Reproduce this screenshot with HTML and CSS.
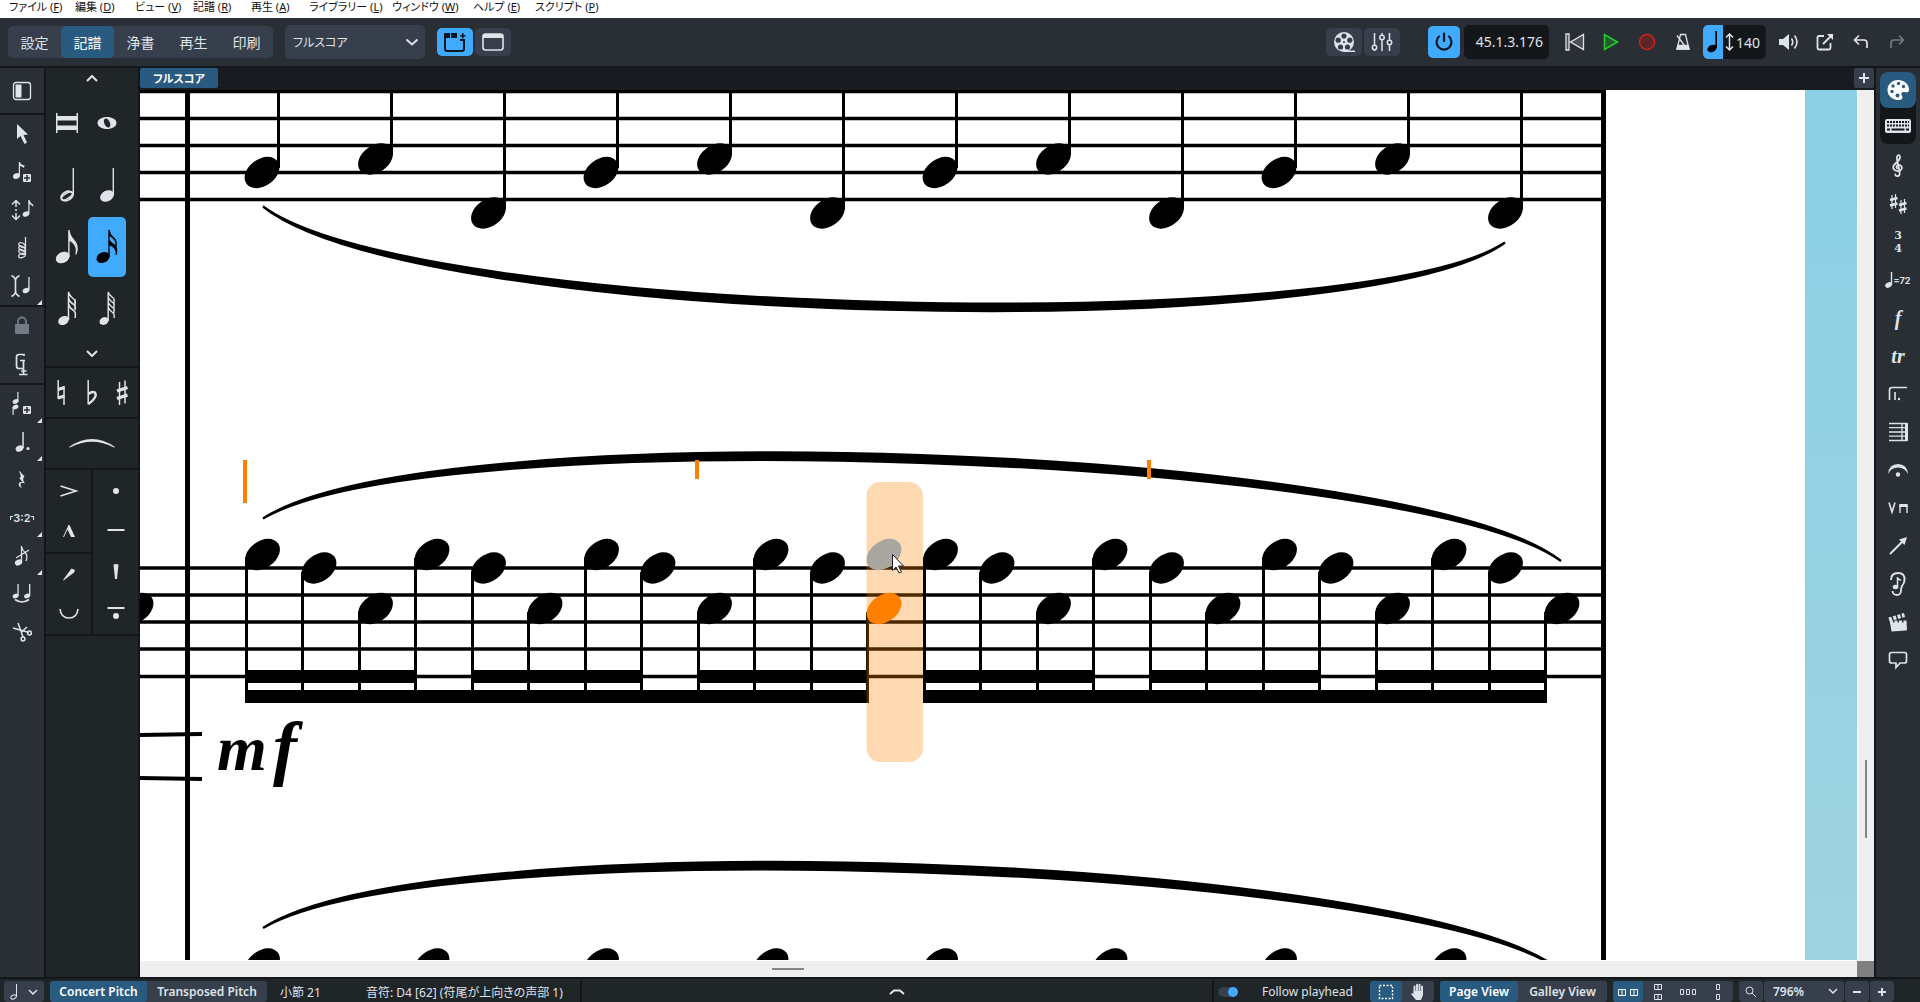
FILE: index.html
```
<!DOCTYPE html>
<html lang="ja">
<head>
    <meta charset="UTF-8">
    <meta name="viewport" content="width=device-width, initial-scale=1.0">
    <title>フルスコア</title>
    <link rel="stylesheet" href="styles.css">
</head>
<body>
    <nav class="menubar">
        <a href="#">ファイル (<u>F</u>)</a>
        <a href="#">編集 (<u>D</u>)</a>
        <a href="#">ビュー (<u>V</u>)</a>
        <a href="#">記譜 (<u>R</u>)</a>
        <a href="#">再生 (<u>A</u>)</a>
        <a href="#">ライブラリー (<u>L</u>)</a>
        <a href="#">ウィンドウ (<u>W</u>)</a>
        <a href="#">ヘルプ (<u>E</u>)</a>
        <a href="#">スクリプト (<u>P</u>)</a>
    </nav>

    <header class="toolbar">
        <div class="modes">
            <button>設定</button>
            <button class="active">記譜</button>
            <button>浄書</button>
            <button>再生</button>
            <button>印刷</button>
        </div>
        <div class="select-wrap layout-select">
            <select aria-label="レイアウト">
                <option>フルスコア</option>
            </select>
            <svg class="chevron" width="14" height="8" viewBox="0 0 14 8"><path d="M1.500 1.500L7 6.500L12.500 1.500"/></svg>
        </div>
        <div class="view-buttons">
            <button class="square bright" aria-label="タブを表示">
                <svg width="22" height="20" viewBox="0 0 22 20"><path d="M16 8H20V17a2 2 0 0 1-2 2H3a2 2 0 0 1-2-2V6" fill="none" stroke="#0b1622" stroke-width="2"/><path d="M0 2a1 1 0 0 1 1-1H6V6H0ZM7 1H13V6H7ZM16 3h2V1h1.500V3h2V4.500h-2v2H18v-2H16Z" fill="#0b1622"/></svg>
            </button>
            <button class="square" aria-label="ウィンドウ">
                <svg width="22" height="18" viewBox="0 0 22 18"><rect x="1" y="1" width="20" height="16" rx="2.500" fill="none" stroke="currentColor" stroke-width="1.600"/><path d="M1 2.500Q1 1 3 1H19Q21 1 21 2.500V5H1Z" fill="currentColor"/></svg>
            </button>
        </div>

        <div class="transport">
            <div class="view-buttons">
                <button class="square" aria-label="ビデオ">
                    <svg width="24" height="22" viewBox="0 0 24 22"><circle cx="12" cy="11" r="10" fill="currentColor"/><path d="M12 19.500h11V21H12Z" fill="currentColor"/><g fill="#363f4b"><circle cx="12" cy="5" r="2.600"/><circle cx="6.200" cy="9.200" r="2.600"/><circle cx="17.800" cy="9.200" r="2.600"/><circle cx="8.500" cy="16" r="2.600"/><circle cx="15.500" cy="16" r="2.600"/><circle cx="12" cy="11" r="1"/></g></svg>
                </button>
                <button class="square" aria-label="ミキサー">
                    <svg class="line" width="22" height="20" viewBox="0 0 22 20"><path d="M3.500 1V13M3.500 18V19M11 1V3M11 8V19M18.500 1V8M18.500 13V19"/><circle cx="3.500" cy="15.500" r="2.200"/><circle cx="11" cy="5.500" r="2.200"/><circle cx="18.500" cy="10.500" r="2.200"/></svg>
                </button>
            </div>
            <button class="power" aria-label="再生を有効化">
                <svg width="20" height="20" viewBox="0 0 20 20" fill="none" stroke="#0b1622" stroke-width="2.200" stroke-linecap="round"><path d="M10 1.500V9M5 4.500a7.500 7.500 0 1 0 10 0"/></svg>
            </button>
            <output class="timecode">45.1.3.176</output>
            <button class="flat" aria-label="先頭に戻る">
                <svg width="20" height="18" viewBox="0 0 20 18" fill="#4b5057" stroke="currentColor" stroke-width="1.300"><path d="M1 1H4V17H1ZM18.500 1.500V16.500L5.500 9Z"/></svg>
            </button>
            <button class="flat" aria-label="再生">
                <svg width="16" height="18" viewBox="0 0 16 18"><path d="M1.500 1.500V16.500L14.500 9Z" fill="#285a30" stroke="#1fd32b" stroke-width="1.500"/></svg>
            </button>
            <button class="flat" aria-label="録音">
                <svg width="18" height="18" viewBox="0 0 18 18"><circle cx="9" cy="9" r="7.500" fill="#5c2528" stroke="#d32222" stroke-width="1.300"/></svg>
            </button>
            <button class="flat" aria-label="メトロノーム">
                <svg width="16" height="18" viewBox="0 0 16 18" fill="none" stroke="currentColor" stroke-width="1.300"><path d="M5.500 1.500H10.500L14 16H2ZM2 2.500L9.500 12.500"/><path d="M3 12.500H13L14 16H2Z" fill="currentColor"/></svg>
            </button>
            <div class="tempo">
                <button aria-label="固定テンポ"><svg width="12" height="22" viewBox="0 0 12 22"><ellipse cx="5" cy="17.500" rx="4.800" ry="3.500" transform="rotate(-25 5 17.500)"/><path d="M8.400 0H10V17H8.400Z"/></svg></button>
                <svg class="line" width="9" height="18" viewBox="0 0 9 18"><path d="M4.500 1V17M1 4.500L4.500 1L8 4.500M1 13.500L4.500 17L8 13.500"/></svg>
                <span>140</span>
            </div>
            <button class="flat" aria-label="音量">
                <svg width="22" height="18" viewBox="0 0 22 18"><path d="M1 6H5L11 1V17L5 12H1Z" fill="currentColor"/><path d="M13.500 5.500Q16 9 13.500 12.500M16.500 2.500Q21.500 9 16.500 15.500" fill="none" stroke="currentColor" stroke-width="1.600"/></svg>
            </button>
            <button class="flat" aria-label="書き出し">
                <svg width="18" height="18" viewBox="0 0 18 18" fill="none" stroke="currentColor" stroke-width="1.800"><path d="M8 3H3Q1.500 3 1.500 4.500V15Q1.500 16.500 3 16.500H13Q14.500 16.500 14.500 15V10M7 11L16 2"/><path d="M11 1H17V7Z" fill="currentColor" stroke="none"/></svg>
            </button>
            <button class="flat" aria-label="元に戻す">
                <svg width="16" height="16" viewBox="0 0 16 16" fill="none" stroke="currentColor" stroke-width="1.700"><path d="M6 1.500L1.500 6L6 10.500M2 6H11Q14 6 14 9V14"/></svg>
            </button>
            <button class="flat dim" aria-label="やり直す">
                <svg width="16" height="16" viewBox="0 0 16 16" fill="none" stroke="currentColor" stroke-width="1.700"><path d="M10 1.500L14.500 6L10 10.500M14 6H5Q2 6 2 9V14"/></svg>
            </button>
        </div>
    </header>

    <main class="workspace">
        <!-- note input toolbox -->
        <aside class="tools">
            <div class="tool-section">
                <button aria-label="パネル"><svg width="20" height="20" viewBox="0 0 20 20"><rect x="1.500" y="1.500" width="17" height="17" rx="2.500" fill="none" stroke="currentColor" stroke-width="1.300"/><path d="M3.500 3.500H9.500V16.500H3.500Z" fill="currentColor"/></svg></button>
            </div>
            <div class="tool-section">
                <button aria-label="選択"><svg width="24" height="24" viewBox="0 0 24 24"><path d="M7 2V17L10.500 14L14.500 22L17 20.500L13.500 13L18 12.500Z" fill="currentColor"/></svg></button>
                <button aria-label="音符の入力"><svg width="24" height="24" viewBox="0 0 24 24"><g fill="currentColor"><ellipse cx="6.500" cy="16" rx="3.600" ry="2.700" transform="rotate(-25 6.500 16)"/><path d="M8.800 2H10Q10.500 4.500 14.500 5.500L14 8Q11.500 6 10 6V15H8.800Z"/><rect x="13" y="14" width="8" height="8" rx="1"/></g><path d="M17 15V21M14 18H20" stroke="#2a2f36" stroke-width="1.500"/></svg></button>
                <button aria-label="ピッチ優先"><svg width="24" height="24" viewBox="0 0 24 24"><path d="M6 3V9M6 11V13M6 15V21M2 6.500L6 2.500L10 6.500M2 17.500L6 21.500L10 17.500" fill="none" stroke="currentColor" stroke-width="1.500"/><g fill="currentColor"><ellipse cx="16" cy="16" rx="3.500" ry="2.500" transform="rotate(-25 16 16)"/><path d="M18.300 2H19.500Q20 4.500 23.500 7L23 8.500Q21 6.500 19.500 6V15H18.300Z"/></g></svg></button>
                <button aria-label="和音"><svg width="24" height="24" viewBox="0 0 24 24" fill="none" stroke="currentColor" stroke-width="1.200"><path d="M15.500 1V19"/><ellipse cx="12" cy="9" rx="3.500" ry="2" transform="rotate(30 12 9)"/><ellipse cx="12" cy="12.500" rx="3.500" ry="2" transform="rotate(30 12 12.500)"/><ellipse cx="12" cy="16" rx="3.500" ry="2" transform="rotate(30 12 16)"/><ellipse cx="12" cy="19.500" rx="3.500" ry="2" transform="rotate(-20 12 19.500)"/></svg></button>
                <button class="more" aria-label="挿入"><svg width="24" height="24" viewBox="0 0 24 24"><path d="M1.500 1.500Q5.500 3.500 5.500 7V17Q5.500 20.500 1.500 22.500M9.500 1.500Q5.500 3.500 5.500 7V17Q5.500 20.500 9.500 22.500" fill="none" stroke="currentColor" stroke-width="1.600"/><ellipse cx="16" cy="16.500" rx="3.500" ry="2.500" transform="rotate(-25 16 16.500)" fill="currentColor"/><path d="M18.300 3H19.600V16H18.300Z" fill="currentColor"/></svg></button>
            </div>
            <div class="tool-section">
                <button class="dim" aria-label="ロック"><svg width="24" height="24" viewBox="0 0 24 24"><rect x="5" y="10" width="14" height="10" rx="1" fill="currentColor"/><path d="M8 11V7.500a4 4 0 0 1 8 0V11" fill="none" stroke="currentColor" stroke-width="1.800"/></svg></button>
                <button aria-label="声部"><svg width="24" height="24" viewBox="0 0 24 24" fill="none" stroke="currentColor" stroke-width="1.700"><path d="M14 4V2.500H9Q6.500 2.500 6.500 5V14Q6.500 16.500 9 16.500H13.500V8.500M10 8.500H15M13.500 16V22M9 22.500H17.500M11 19H16.500"/></svg></button>
            </div>
            <div class="tool-section grow">
                <button class="more" aria-label="和音の追加"><svg width="24" height="24" viewBox="0 0 24 24"><g fill="currentColor"><ellipse cx="5.500" cy="9.500" rx="3" ry="2.200" transform="rotate(-25 5.500 9.500)"/><path d="M7.300 0H8.500V10H7.300Z"/><ellipse cx="5.500" cy="15" rx="3" ry="2.200" transform="rotate(-25 5.500 15)"/><path d="M2.500 15H3.700V23H2.500Z"/><rect x="13" y="14" width="8" height="8" rx="1"/></g><path d="M17 15V21M14 18H20" stroke="#2a2f36" stroke-width="1.500"/></svg></button>
                <button class="more" aria-label="付点"><svg width="24" height="24" viewBox="0 0 24 24" fill="currentColor"><ellipse cx="9.500" cy="18.500" rx="4" ry="3" transform="rotate(-25 9.500 18.500)"/><path d="M12.300 2H13.800V18H12.300Z"/><circle cx="18" cy="18.500" r="1.600"/></svg></button>
                <button aria-label="休符"><svg width="24" height="24" viewBox="0 0 24 24"><path d="M9.500 3L14.500 8.500Q11.500 11 15 15.500Q10.500 13.500 10.500 16.500Q10.500 18.500 12.500 20.500Q7.500 18 9 15Q10 13.500 12.500 14L9.500 10.500Q12 8 9 3.500Z" fill="currentColor"/></svg></button>
                <button class="more tuplet" aria-label="連符"><i></i><span>3:2</span><i class="right"></i></button>
                <button class="more" aria-label="装飾音符"><svg width="24" height="24" viewBox="0 0 24 24"><ellipse cx="8.500" cy="18.500" rx="3.800" ry="2.800" transform="rotate(-25 8.500 18.500)" fill="currentColor"/><path d="M11.500 18V2Q12 6 15.500 9Q18 12 16 17M6 14L19 6" fill="none" stroke="currentColor" stroke-width="1.300"/></svg></button>
                <button aria-label="タイ"><svg width="24" height="24" viewBox="0 0 24 24"><g fill="currentColor"><ellipse cx="5.500" cy="14" rx="3" ry="2.300" transform="rotate(-25 5.500 14)"/><path d="M7.400 2H8.700V14H7.400Z"/><ellipse cx="17" cy="14" rx="3" ry="2.300" transform="rotate(-25 17 14)"/><path d="M19 2H20.300V14H19Z"/></g><path d="M5 17.500Q12 22.500 19 17.500" fill="none" stroke="currentColor" stroke-width="1.600"/></svg></button>
                <button aria-label="はさみ"><svg width="24" height="24" viewBox="0 0 24 24" fill="none" stroke="currentColor" stroke-width="1.500"><path d="M8 3L13 17M3 8L19 12.500M17 7L11 12.500"/><circle cx="13" cy="19" r="1.900"/><circle cx="19.500" cy="13" r="1.900"/></svg></button>
            </div>
        </aside>

        <!-- durations, accidentals, articulations -->
        <aside class="notes-panel">
            <section class="durations">
                <button class="scroll" aria-label="上へ"><svg class="chevron" width="12" height="7" viewBox="0 0 12 7"><path d="M1 6L6 1L11 6"/></svg></button>
                <div class="duration-grid">
                    <button aria-label="倍全音符"><svg width="28" height="36" viewBox="0 0 28 36" fill="currentColor"><path d="M3 8H4.500V28H3ZM23.500 8H25V28H23.500ZM4 11H24V15.500H4ZM4 20.500H24V25H4Z"/></svg></button>
                    <button aria-label="全音符"><svg width="28" height="36" viewBox="0 0 28 36"><path fill-rule="evenodd" d="M14 12C19 12 23.500 14.500 23.500 18S19 24 14 24 4.500 21.500 4.500 18 9 12 14 12ZM12.500 13.500C10.500 14 10.500 16.500 11.500 19 12.500 21.500 14.500 23 16 22.500 17.800 21.800 17.500 19 16.500 16.800 15.500 14.500 14 13 12.500 13.500Z" fill="currentColor"/></svg></button>
                    <button aria-label="2分音符"><svg width="28" height="36" viewBox="0 0 28 36"><ellipse cx="14" cy="29" rx="6.300" ry="4.200" transform="rotate(-28 14 29)" fill="none" stroke="currentColor" stroke-width="1.800"/><ellipse cx="14" cy="29" rx="6.200" ry="2.600" transform="rotate(-32 14 29)" fill="none" stroke="currentColor" stroke-width="1.500"/><path d="M19.600 1H21V28H19.600Z" fill="currentColor"/></svg></button>
                    <button aria-label="4分音符"><svg width="28" height="36" viewBox="0 0 28 36" fill="currentColor"><ellipse cx="14" cy="29" rx="7.200" ry="5.300" transform="rotate(-28 14 29)"/><path d="M19.600 1H21V28H19.600Z"/></svg></button>
                    <button aria-label="8分音符"><svg width="28" height="36" viewBox="0 0 28 36" fill="currentColor"><ellipse cx="9.700" cy="28.500" rx="7.200" ry="5.300" transform="rotate(-28 9.700 28.500)"/><path d="M15.200 1H16.600Q17 6 21 10.500Q27 17 23.500 25.500H22.300Q24.500 16 16.600 12V28H15.200Z"/></svg></button>
                    <button class="active" aria-label="16分音符"><svg width="28" height="36" viewBox="0 0 28 36" fill="currentColor"><ellipse cx="10" cy="28.500" rx="6.800" ry="5.200" transform="rotate(-28 10 28.500)"/><path d="M15.300 1H16.700Q17 5 20.500 8Q25 11.500 23.500 17Q25 21 23.500 26H22.500Q23.500 19 16.700 16.500V28H15.300ZM16.700 7V10.500Q17.500 13 22.500 16Q23 11 16.700 7Z" fill-rule="evenodd"/></svg></button>
                    <button aria-label="32分音符"><svg width="28" height="36" viewBox="0 0 28 36"><ellipse cx="10.500" cy="29.500" rx="5.600" ry="4.200" transform="rotate(-28 10.500 29.500)" fill="currentColor"/><path d="M15.500 29V1Q16.500 5 20 7.500T22 13M15.500 7Q16.500 11 20 13T22 19M15.500 13Q16.500 17 20 19T22 27M22 8V18" fill="none" stroke="currentColor" stroke-width="1.500"/></svg></button>
                    <button aria-label="64分音符"><svg width="28" height="36" viewBox="0 0 28 36"><ellipse cx="11" cy="30" rx="4.700" ry="3.700" transform="rotate(-28 11 30)" fill="currentColor"/><path d="M15.200 30V1Q16 4 19 6T21 10M15.200 6Q16 9 19 11T21 15M15.200 11Q16 14 19 16T21 20M15.200 16Q16 19 19 21T21 27M21 8V22" fill="none" stroke="currentColor" stroke-width="1.400"/></svg></button>
                </div>
                <button class="scroll" aria-label="下へ"><svg class="chevron" width="12" height="7" viewBox="0 0 12 7"><path d="M1 1L6 6L11 1"/></svg></button>
            </section>
            <section class="accidentals">
                <button aria-label="ナチュラル"><svg width="20" height="28" viewBox="0 0 20 28" fill="none" stroke="currentColor"><path d="M7.200 1V20M13 7V26" stroke-width="1.500"/><path d="M7 10.500L13.500 8.500M7 19L13.500 17" stroke-width="3.400"/></svg></button>
                <button aria-label="フラット"><svg width="20" height="28" viewBox="0 0 20 28" fill="none" stroke="currentColor"><path d="M6.200 1V25.500" stroke-width="1.500"/><path d="M6.500 15Q10 12 13 13.500Q16 18 6.500 25" stroke-width="2.400"/></svg></button>
                <button aria-label="シャープ"><svg width="20" height="28" viewBox="0 0 20 28" fill="none" stroke="currentColor"><path d="M6.500 3V26M12 1.500V24.500" stroke-width="1.500"/><path d="M4 12L14.500 8.500M4 19.500L14.500 16" stroke-width="3.400"/></svg></button>
            </section>
            <section class="slur-row">
                <button aria-label="スラー"><svg width="46" height="10" viewBox="0 0 46 10"><path d="M0 8Q23-8 46 8L45 8.500Q23-3 1 8.500Z" fill="currentColor"/></svg></button>
            </section>
            <section class="articulations">
                <div class="artic-col">
                    <button aria-label="アクセント"><svg width="20" height="20" viewBox="0 0 20 20"><path d="M1.500 5L17 10L1.500 15" fill="none" stroke="currentColor" stroke-width="1.700"/></svg></button>
                    <button aria-label="マルカート"><svg width="20" height="20" viewBox="0 0 20 20"><path d="M4 15L9.500 3H10.500L16 15H12L8.500 7.500L5 15Z" fill="currentColor"/></svg></button>
                    <button class="divided" aria-label="強拍"><svg width="20" height="20" viewBox="0 0 20 20"><path d="M4 16L12.500 4.500L16 6L15 8.500L4.500 16.500Z" fill="currentColor"/></svg></button>
                    <button aria-label="弱拍"><svg width="20" height="20" viewBox="0 0 20 20"><path d="M1 5Q2 14 10 14T19 5" fill="none" stroke="currentColor" stroke-width="1.700"/></svg></button>
                </div>
                <div class="artic-col">
                    <button aria-label="スタッカート"><svg width="20" height="20" viewBox="0 0 20 20"><circle cx="10" cy="10" r="3" fill="currentColor"/></svg></button>
                    <button aria-label="テヌート"><svg width="20" height="20" viewBox="0 0 20 20"><path d="M1.500 7H18.500V9H1.500Z" fill="currentColor"/></svg></button>
                    <button aria-label="スタッカーティッシモ"><svg width="20" height="20" viewBox="0 0 20 20"><path d="M7.500 1.500Q10 .5 12.500 1.500L11 16H9Z" fill="currentColor"/></svg></button>
                    <button aria-label="テヌート・スタッカート"><svg width="20" height="20" viewBox="0 0 20 20"><path d="M1.500 3H18.500V5H1.500Z" fill="currentColor"/><circle cx="10" cy="12" r="3" fill="currentColor"/></svg></button>
                </div>
            </section>
            <section class="rest"></section>
        </aside>

        <div class="editor">
            <div class="tabs">
                <button class="tab">フルスコア</button>
                <button class="add-tab" aria-label="新規タブ"><svg width="10" height="10" viewBox="0 0 10 10"><path d="M4 0H6V4H10V6H6V10H4V6H0V4H4Z" fill="currentColor"/></svg></button>
            </div>
            <div class="viewport">
                <div class="page">
                    <svg class="score" role="img" aria-label="小節 21">
                        <defs>
                            <ellipse id="head" rx="19.200" ry="13.400" transform="rotate(-36)"/>
                        </defs>
                        <g transform="translate(-140 -90)">
                            <!-- staves -->
                            <path class="staff" d="M140 91.500H1604M140 118.500H1604M140 145.500H1604M140 172.500H1604M140 199.500H1604M140 568H1604M140 595H1604M140 622H1604M140 649H1604M140 676.500H1604"/>
                            <path class="barline" d="M187.500 90V961M1603.500 90V961"/>

                            <!-- upper staff -->
                            <path class="stem" d="M278.500 90V168M391.500 90V155M504.500 90V209M617.500 90V168M730.500 90V155M843.500 90V209M956.500 90V168M1069.500 90V155M1182.500 90V209M1295.500 90V168M1408.500 90V155M1521.500 90V209"/>
                            <use href="#head" x="262" y="172.500"/><use href="#head" x="375.500" y="159"/><use href="#head" x="488.500" y="213"/>
                            <use href="#head" x="601" y="172.500"/><use href="#head" x="714.500" y="159"/><use href="#head" x="827.500" y="213"/>
                            <use href="#head" x="940" y="172.500"/><use href="#head" x="1053.500" y="159"/><use href="#head" x="1166.500" y="213"/>
                            <use href="#head" x="1279" y="172.500"/><use href="#head" x="1392.500" y="159"/><use href="#head" x="1505.500" y="213"/>
                            <path class="slur" d="M263 206.500C415 318 1360 338 1505 242.500C1360 348 415 328 263 206.500Z"/>

                            <!-- middle staff -->
                            <path class="stem" d="M246.500 558V703M302.500 572V703M359.500 612V703M415.500 558V703M472.500 572V703M528.500 612V703M585.500 558V703M641.500 572V703M698.500 612V703M754.500 558V703M811.500 572V703M867.500 612V703M924.500 558V703M980.500 572V703M1037.500 612V703M1093.500 558V703M1150.500 572V703M1206.500 612V703M1263.500 558V703M1319.500 572V703M1376.500 612V703M1432.500 558V703M1489.500 572V703M1545.500 612V703"/>
                            <path class="beam" d="M245 676.500H417M471 676.500H643M697 676.500H869M923 676.500H1095M1149 676.500H1321M1375 676.500H1547M245 696.500H869M923 696.500H1547"/>
                            <use href="#head" x="136" y="608.500"/>
                            <use href="#head" x="262.500" y="554.500"/><use href="#head" x="319" y="568"/><use href="#head" x="375.500" y="608.500"/>
                            <use href="#head" x="432" y="554.500"/><use href="#head" x="488.500" y="568"/><use href="#head" x="545" y="608.500"/>
                            <use href="#head" x="601.500" y="554.500"/><use href="#head" x="658" y="568"/><use href="#head" x="714.500" y="608.500"/>
                            <use href="#head" x="771" y="554.500"/><use href="#head" x="827.500" y="568"/>
                            <use href="#head" x="940.500" y="554.500"/><use href="#head" x="997" y="568"/><use href="#head" x="1053.500" y="608.500"/>
                            <use href="#head" x="1110" y="554.500"/><use href="#head" x="1166.500" y="568"/><use href="#head" x="1223" y="608.500"/>
                            <use href="#head" x="1279.500" y="554.500"/><use href="#head" x="1336" y="568"/><use href="#head" x="1392.500" y="608.500"/>
                            <use href="#head" x="1449" y="554.500"/><use href="#head" x="1505.500" y="568"/><use href="#head" x="1562" y="608.500"/>
                            <path class="slur" d="M263 518.500C433 409 1414 445 1561 561C1414 455 433 419 263 518.500Z"/>
                            <path class="hairpin" d="M140 735L202 734M140 778L202 779"/>
                            <text class="dynamic" x="217" y="770">m</text>
                            <text class="dynamic forte" x="273" y="772">f</text>

                            <!-- lower staff -->
                            <use href="#head" x="262.500" y="964"/><use href="#head" x="432" y="964"/><use href="#head" x="601.500" y="964"/>
                            <use href="#head" x="771" y="964"/><use href="#head" x="940.500" y="964"/><use href="#head" x="1110" y="964"/>
                            <use href="#head" x="1279.500" y="964"/><use href="#head" x="1449" y="964"/>
                            <path class="slur" d="M263 928C433 818.500 1414 854.500 1561 970.500C1414 864.500 433 828.500 263 928Z"/>

                            <!-- caret grid and current position -->
                            <path class="tick" d="M245 460V503M697 460V479M1149 460V479"/>
                            <rect class="caret" x="866.500" y="482" width="56.500" height="280" rx="14"/>
                            <use class="shadow-note" href="#head" x="884" y="554.500"/>
                            <use class="selected-note" href="#head" x="884" y="608.500"/>
                            <path class="pointer" d="M892.500 554.500V570.500L896 567L899 573L901.500 572L898.500 566H903.500Z"/>
                        </g>
                    </svg>
                    <div class="desk"></div>
                </div>
                <div class="vscroll"><i></i></div>
                <div class="hscroll"><i></i></div>
                <div class="corner"></div>
            </div>
        </div>

        <!-- notations toolbox -->
        <aside class="notations">
            <div class="panel-switch">
                <button class="active" aria-label="パレット"><svg width="24" height="24" viewBox="0 0 24 24"><path d="M12 2C18 2 23 6 23 11.500C23 15 20.500 14.500 18.500 14C15.500 13.500 14.500 15.500 16 18C17.500 20.500 15.500 22 12.500 22C6 22 1.500 17.500 1.500 12S6 2 12 2Z" fill="#fff"/><g fill="#295a80"><circle cx="6" cy="13.500" r="1.700"/><circle cx="7" cy="8" r="1.700"/><circle cx="12.500" cy="5.500" r="1.700"/><circle cx="17.500" cy="8.500" r="1.700"/><circle cx="11.500" cy="17.500" r="2"/></g></svg></button>
                <button aria-label="キーボード"><svg width="26" height="14" viewBox="0 0 26 14"><rect x="0" y="0" width="26" height="14" rx="2" fill="currentColor"/><path d="M2 3H24M2 6.500H24" stroke="#14171a" stroke-width="1.800" stroke-dasharray="2 1"/><path d="M2 10.500H5M6.500 10.500H19.500M21 10.500H24" stroke="#14171a" stroke-width="1.800"/></svg></button>
            </div>
            <button aria-label="音部記号"><svg width="24" height="26" viewBox="0 0 24 24"><path d="M11.200 14.500C9.800 13.200 10.600 10.900 12.800 10.900C16 11 17 14.600 14.600 16.300C11.800 18 7.400 16.800 7.200 13.300C7 9.500 14 7.500 14 3.500C14 .5 11.500.5 11 3C10.500 5.500 12 9.500 12.600 12.600C13.200 15.500 14.200 19.500 13.400 21C12.400 22.800 9.400 22.500 9.300 20.500" fill="none" stroke="currentColor" stroke-width="1.800" stroke-linecap="round"/></svg></button>
            <button aria-label="調号"><svg width="24" height="24" viewBox="0 0 24 24" fill="none" stroke="currentColor"><path d="M6 3V17M9.500 2V16M15 8V22M18.500 7V21" stroke-width="1.200"/><path d="M4 8L11.500 6M4 13.500L11.500 11.500M13 13L20.500 11M13 18.500L20.500 16.500" stroke-width="2.400"/></svg></button>
            <button class="time-sig" aria-label="拍子記号"><span>3</span><span>4</span></button>
            <button class="tempo-mark" aria-label="テンポ"><svg width="8" height="16" viewBox="0 0 8 16" fill="currentColor"><ellipse cx="3.500" cy="13" rx="3.500" ry="2.600" transform="rotate(-25 3.500 13)"/><path d="M5.800 0H7.200V13H5.800Z"/></svg><span>=72</span></button>
            <button class="glyph" aria-label="強弱記号">f</button>
            <button class="glyph" aria-label="装飾音">tr</button>
            <button aria-label="反復記号"><svg width="24" height="24" viewBox="0 0 24 24" fill="none" stroke="currentColor" stroke-width="1.600"><path d="M3.500 18V8Q3.500 5.500 6 5.500H21M9 10V18"/><circle cx="13" cy="17" r="1.200" fill="currentColor" stroke="none"/></svg></button>
            <button aria-label="小節線"><svg width="24" height="24" viewBox="0 0 24 24"><path d="M3 3.500H21M3 7.700H21M3 12H21M3 16.200H21M3 20.500H21M16 3V21" fill="none" stroke="currentColor" stroke-width="1.300"/><path d="M19 3H22V21H19Z" fill="currentColor"/></svg></button>
            <button aria-label="フェルマータ"><svg width="24" height="24" viewBox="0 0 24 24" fill="currentColor"><path d="M2 16Q3 6 12 6T22 16Q19 9.500 12 9.500T2 16Z"/><circle cx="12" cy="16.500" r="2.200"/></svg></button>
            <button aria-label="奏法"><svg width="24" height="24" viewBox="0 0 24 24" fill="none" stroke="currentColor"><path d="M3 6.500L6 16L9 6.500" stroke-width="1.600"/><path d="M14 17V9M21 17V9" stroke-width="1.400"/><path d="M13.300 9.500H21.700" stroke-width="3"/></svg></button>
            <button aria-label="線"><svg width="24" height="24" viewBox="0 0 24 24"><path d="M4 20L17 7" stroke="currentColor" stroke-width="2"/><path d="M21 3L18.500 11L13 5.500Z" fill="currentColor"/></svg></button>
            <button aria-label="プレイバック"><svg width="24" height="26" viewBox="0 0 24 26"><path d="M5 9Q5 2 12 2T18.500 9Q18.500 12 16 15Q15 17 15 20Q14.500 24 11 24Q7 24 6.500 20" fill="none" stroke="currentColor" stroke-width="1.900"/><ellipse cx="9.500" cy="16" rx="2.800" ry="2.200" fill="currentColor"/><path d="M11.500 16V6Q12 9 15 9" fill="none" stroke="currentColor" stroke-width="1.500"/></svg></button>
            <button aria-label="キュー"><svg width="24" height="24" viewBox="0 0 24 24"><path d="M4 12.500H20.500L21 20L20 20.500L5.500 21.500Z" fill="currentColor"/><path d="M3 9.500L18.500 5" stroke="currentColor" stroke-width="4" stroke-dasharray="3 1.500"/><path d="M4 12H20.500" stroke="currentColor" stroke-width="3" stroke-dasharray="3 1.500"/></svg></button>
            <button aria-label="コメント"><svg width="24" height="24" viewBox="0 0 24 24"><path d="M5.500 4.500H18.500Q20.500 4.500 20.500 6.500V13Q20.500 15 18.500 15H14L10 19.500V15H5.500Q3.500 15 3.500 13V6.500Q3.500 4.500 5.500 4.500Z" fill="none" stroke="currentColor" stroke-width="1.700"/></svg></button>
        </aside>
    </main>

    <footer class="status">
        <div class="status-left">
            <button class="note-value" aria-label="リズムグリッド"><svg width="8" height="16" viewBox="0 0 8 16" fill="none" stroke="currentColor"><ellipse cx="3.500" cy="13" rx="2.800" ry="1.900" transform="rotate(-25 3.500 13)"/><path d="M6.500 0V13"/></svg><svg class="chevron" width="10" height="6" viewBox="0 0 10 6"><path d="M1 1L5 5L9 1"/></svg></button>
            <div class="segment pitch">
                <button class="active">Concert Pitch</button>
                <button>Transposed Pitch</button>
            </div>
            <span class="bar-no">小節 21</span>
            <span class="selection">音符: D4 [62] (符尾が上向きの声部 1)</span>
        </div>
        <button class="lower-zone" aria-label="下ゾーン"><svg width="16" height="6" viewBox="0 0 16 6"><path d="M1 5L5 1.500H11L15 5" fill="none" stroke="currentColor" stroke-width="2"/></svg></button>
        <div class="status-right">
            <input class="toggle" type="checkbox" id="follow" checked>
            <label for="follow">Follow playhead</label>
            <div class="segment pointer-mode">
                <button class="active" aria-label="範囲選択"><svg width="16" height="16" viewBox="0 0 16 16"><rect x="1.500" y="1.500" width="13" height="13" fill="none" stroke="#fff" stroke-width="1.400" stroke-dasharray="2 1.500"/></svg></button>
                <button aria-label="ハンドツール"><svg width="16" height="18" viewBox="0 0 16 18"><path d="M4.500 10V3.500M7 9V1.800M9.500 9V1.800M12 10V3.500" stroke="currentColor" stroke-width="1.900" stroke-linecap="round"/><path d="M3.600 8H13V12L11 17H6L1 11Q1.500 9.500 3.600 11Z" fill="currentColor"/></svg></button>
            </div>
            <div class="segment views">
                <button class="active">Page View</button>
                <button>Galley View</button>
            </div>
            <div class="segment arrangement">
                <button class="active" aria-label="見開き横"><svg class="boxes" width="22" height="18" viewBox="0 0 22 18"><path d="M1.500 6.500H8.500V12.500H1.500ZM5 6.500V12.500M13.500 6.500H20.500V12.500H13.500ZM17 6.500V12.500"/></svg></button>
                <button aria-label="見開き縦"><svg class="boxes" width="22" height="18" viewBox="0 0 22 18"><path d="M7.500 1.500H14.500V6.500H7.500ZM11 1.500V6.500M7.500 11.500H14.500V16.500H7.500ZM11 11.500V16.500"/></svg></button>
                <button aria-label="単ページ横"><svg class="boxes" width="22" height="18" viewBox="0 0 22 18"><path d="M3.500 6.500H6.500V11.500H3.500ZM9.500 6.500H12.500V11.500H9.500ZM15.500 6.500H18.500V11.500H15.500Z"/></svg></button>
                <button aria-label="単ページ縦"><svg class="boxes" width="22" height="18" viewBox="0 0 22 18"><path d="M9.500 1.500H12.500V6.500H9.500ZM9.500 11.500H12.500V16.500H9.500Z"/></svg></button>
            </div>
            <div class="zoom-group">
                <button class="search" aria-label="ズーム"><svg width="12" height="12" viewBox="0 0 12 12" fill="none" stroke="currentColor"><circle cx="4.500" cy="4.500" r="3.500"/><path d="M7 7L11 11"/></svg></button>
                <div class="select-wrap zoom-select">
                    <select aria-label="ズーム率">
                        <option>796%</option>
                    </select>
                    <svg class="chevron" width="10" height="6" viewBox="0 0 10 6"><path d="M1 1L5 5L9 1"/></svg>
                </div>
                <button aria-label="縮小"><svg width="10" height="10" viewBox="0 0 10 10"><path d="M1 4H9V6H1Z" fill="currentColor"/></svg></button>
                <button aria-label="拡大"><svg width="10" height="10" viewBox="0 0 10 10"><path d="M4 1H6V4H9V6H6V9H4V6H1V4H4Z" fill="currentColor"/></svg></button>
            </div>
        </div>
    </footer>
</body>
</html>
```

FILE: styles.css
```
* {
    box-sizing: border-box;
}
body {
    margin: 0;
    height: 100vh;
    display: flex;
    flex-direction: column;
    overflow: hidden;
    background-color: #14171a;
    color: #dfe3ea;
    font-family: "Noto Sans", "Noto Sans CJK JP", sans-serif;
    font-size: 12px;
    font-feature-settings: "palt";
}
button,
select {
    margin: 0;
    padding: 0;
    border: none;
    background: none;
    color: inherit;
    font: inherit;
    font-feature-settings: inherit;
}
button {
    display: flex;
    align-items: center;
    justify-content: center;
    white-space: nowrap;
}
svg {
    display: block;
    flex-shrink: 0;
}
.chevron {
    fill: none;
    stroke: #dfe3ea;
    stroke-width: 2;
}
.line {
    fill: none;
    stroke: currentColor;
    stroke-width: 1.5;
}
.dim {
    color: #757b84;
}

/* menu */
.menubar {
    height: 18px;
    flex-shrink: 0;
    display: grid;
    grid-template-columns: 66px 60px 58px 58px 58px 83px 81px 62px 80px;
    padding-left: 9px;
    background-color: #fff;
    font-size: 11px;
    line-height: 14px;
}
.menubar a {
    color: #111;
    text-decoration: none;
    white-space: nowrap;
}

/* toolbar */
.toolbar {
    height: 48px;
    flex-shrink: 0;
    display: flex;
    align-items: center;
    padding: 0 5px 0 8px;
    background-color: #2a2f36;
}
.modes {
    display: flex;
    border-radius: 5px;
    background-color: #363f4b;
}
.modes button {
    width: 53px;
    height: 32px;
    border-radius: 5px;
    font-size: 14px;
}
.modes .active {
    background-color: #295a80;
    color: #fff;
}
.select-wrap {
    position: relative;
    display: flex;
}
.select-wrap select {
    width: 100%;
    appearance: none;
}
.select-wrap .chevron {
    position: absolute;
    top: 50%;
    right: 6px;
    margin-top: -4px;
    pointer-events: none;
}
.layout-select {
    width: 140px;
    height: 34px;
    margin: 0 12px;
    border-radius: 5px;
    background-color: #363f4b;
}
.layout-select select {
    padding-left: 8px;
}
.view-buttons {
    display: flex;
    gap: 2px;
}
.square {
    width: 36px;
    height: 28px;
    border-radius: 5px;
    background-color: #363f4b;
}
.square.bright {
    background-color: #40aaff;
}
.transport {
    display: flex;
    align-items: center;
    margin-left: auto;
}
.power {
    width: 32px;
    height: 32px;
    margin-left: 28px;
    border-radius: 5px;
    background-color: #40aaff;
}
.timecode {
    width: 85px;
    height: 34px;
    margin: 0 8px 0 4px;
    padding-right: 6px;
    border-radius: 5px;
    background-color: #14171a;
    font-size: 14px;
    line-height: 34px;
    text-align: right;
}
.flat {
    width: 36px;
    height: 32px;
}
.tempo {
    display: flex;
    align-items: center;
    gap: 2px;
    width: 63px;
    height: 34px;
    margin: 0 5px 0 2px;
    border-radius: 5px;
    overflow: hidden;
    background-color: #14171a;
    font-size: 14px;
}
.tempo button {
    width: 20px;
    height: 34px;
    background-color: #40aaff;
    color: #000;
}

/* work area */
.workspace {
    flex: 1;
    min-height: 0;
    display: flex;
    gap: 2px;
    padding: 2px 0;
}
.tools {
    width: 44px;
    display: flex;
    flex-direction: column;
    gap: 2px;
}
.tool-section {
    background-color: #2a2f36;
}
.tool-section button {
    position: relative;
    width: 44px;
    height: 38px;
}
.tool-section:first-child button {
    height: 45px;
}
.grow {
    flex: 1;
}
.more::after {
    content: "";
    position: absolute;
    right: 2px;
    bottom: 0;
    border-left: 5px solid transparent;
    border-bottom: 5px solid #dfe3ea;
}
.tuplet {
    font-family: Inter, sans-serif;
    font-size: 11px;
    font-weight: 600;
}
.tuplet i {
    width: 3px;
    height: 4px;
    border: 1px solid #dfe3ea;
    border-width: 1px 0 0 1px;
}
.tuplet .right {
    border-width: 1px 1px 0 0;
}

.notes-panel {
    width: 92px;
    display: flex;
    flex-direction: column;
    gap: 2px;
}
.notes-panel section {
    background-color: #202528;
}
.durations {
    height: 298px;
}
.scroll {
    width: 92px;
    height: 20px;
}
.duration-grid {
    display: grid;
    grid-template-columns: 38px 38px;
    gap: 2px;
    padding: 5px 0 4px 2px;
}
.duration-grid button {
    height: 60px;
    border-radius: 5px;
}
.duration-grid .active {
    background-color: #40aaff;
    color: #000;
}
.accidentals {
    display: flex;
    justify-content: space-around;
    height: 49px;
}
.slur-row {
    display: flex;
    justify-content: center;
    height: 49px;
}
.notes-panel .articulations {
    display: grid;
    grid-template-columns: 1fr 1fr;
    gap: 2px;
    background-color: #14171a;
}
.artic-col {
    background-color: #202528;
}
.artic-col button {
    width: 45px;
    height: 41px;
}
.artic-col .divided {
    border-top: 2px solid #14171a;
}
.notes-panel .rest {
    flex: 1;
}

/* score */
.editor {
    flex: 1;
    min-width: 0;
    display: flex;
    flex-direction: column;
}
.tabs {
    display: flex;
    justify-content: space-between;
    height: 22px;
    flex-shrink: 0;
    background-color: #181b20;
}
.tab {
    width: 78px;
    height: 20px;
    border-radius: 2px;
    background-color: #295a80;
    color: #fff;
    font-weight: 700;
    font-size: 11px;
}
.add-tab {
    width: 20px;
    height: 20px;
    border-radius: 2px;
    background-color: #363f4b;
}
.viewport {
    flex: 1;
    min-height: 0;
    display: grid;
    grid-template: 1fr 16px / 1fr 17px;
    background-color: #efefef;
}
.page {
    display: flex;
    min-width: 0;
    min-height: 0;
    overflow: hidden;
    background-color: #fff;
    border-bottom: 1px solid #fff;
}
.score {
    flex: 1;
    min-width: 0;
    height: 100%;
}
.desk {
    width: 52px;
    background: linear-gradient(#8acfe5, #9fd3e0);
}
.vscroll {
    display: flex;
    justify-content: center;
    align-items: flex-start;
    border-left: 1px solid #fff;
}
.vscroll i {
    width: 2px;
    height: 78px;
    margin-top: 670px;
    background-color: #858585;
}
.hscroll {
    display: flex;
    align-items: center;
}
.hscroll i {
    width: 32px;
    height: 2px;
    margin-left: 632px;
    background-color: #858585;
}
.corner {
    background-color: #808080;
}
.staff,
.stem {
    stroke: #000;
    stroke-width: 3;
}
.staff {
    stroke-width: 3.4;
}
.barline {
    stroke: #000;
    stroke-width: 5;
}
.beam {
    stroke: #000;
    stroke-width: 13;
}
.slur {
    stroke: #000;
    stroke-width: 2.4;
    stroke-linejoin: bevel;
}
.hairpin {
    stroke: #000;
    stroke-width: 4;
}
.dynamic {
    font-family: "Liberation Serif", serif;
    font-size: 64px;
    font-weight: 700;
    font-style: italic;
}
.forte {
    font-size: 72px;
}
.tick {
    stroke: #ff8000;
    stroke-width: 4;
}
.caret {
    fill: #ff8200;
    fill-opacity: 0.3;
}
.shadow-note {
    fill: #a9a69f;
}
.selected-note {
    fill: #ff8000;
}
.pointer {
    fill: #fff;
    stroke: #1c1c28;
}

/* right toolbox */
.notations {
    width: 44px;
    display: flex;
    flex-direction: column;
    align-items: center;
    padding-top: 4px;
    background-color: #2a2f36;
}
.notations button {
    width: 36px;
    height: 38px;
}
.panel-switch {
    margin-bottom: 3px;
    border-radius: 8px;
    background-color: #14171a;
}
.notations .panel-switch button {
    height: 36px;
    border-radius: 8px;
}
.panel-switch .active {
    background-color: #295a80;
}
.notations .time-sig {
    flex-direction: column;
    font-family: "DejaVu Serif", serif;
    font-size: 11px;
    font-weight: 700;
    line-height: 13px;
}
.tempo-mark {
    font-family: Inter, sans-serif;
    font-size: 9px;
    font-weight: 700;
}
.glyph {
    font-family: "Liberation Serif", serif;
    font-size: 20px;
    font-style: italic;
    font-weight: 700;
}

/* status bar */
.status {
    height: 23px;
    flex-shrink: 0;
    display: flex;
    align-items: stretch;
    padding-top: 2px;
    background-color: #202528;
}
.status-left,
.status-right {
    display: flex;
    align-items: center;
}
.status-left {
    width: 582px;
    padding-left: 4px;
    border-right: 2px solid #14171a;
}
.status button {
    height: 21px;
}
.note-value {
    width: 40px;
    gap: 10px;
    margin-right: 6px;
    border-radius: 3px;
    background-color: #363f4b;
}
.status .chevron {
    stroke-width: 1.5;
}
.segment {
    display: flex;
    border-radius: 3px;
    background-color: #363f4b;
}
.segment .active {
    border-radius: 3px;
    background-color: #295a80;
    color: #fff;
}
.pitch,
.views {
    font-weight: 600;
}
.pitch button {
    width: 97px;
}
.pitch button + button {
    width: 120px;
}
.bar-no {
    width: 99px;
    padding-left: 13px;
}
.lower-zone {
    flex: 1;
}
.status-right {
    padding: 0 26px 0 4px;
    border-left: 2px solid #14171a;
}
.toggle {
    appearance: none;
    display: flex;
    justify-content: flex-end;
    width: 20px;
    height: 10px;
    margin: 0 24px 0 0;
    border-radius: 5px;
    background-color: #363f4b;
}
.toggle::before {
    content: "";
    width: 10px;
    height: 10px;
    border-radius: 5px;
    background-color: #40aaff;
}
.status label {
    width: 108px;
}
.pointer-mode {
    margin-right: 6px;
}
.pointer-mode button {
    width: 32px;
}
.views {
    margin-right: 6px;
}
.views button {
    width: 78px;
}
.views button + button {
    width: 89px;
}
.arrangement {
    margin-right: 6px;
}
.arrangement button {
    width: 30px;
}
.boxes {
    fill: none;
    stroke: currentColor;
}
.zoom-group {
    display: flex;
    gap: 1px;
}
.zoom-group > * {
    width: 24px;
    border-radius: 3px;
    background-color: #363f4b;
}
.zoom-group .zoom-select {
    width: 80px;
    font-weight: 600;
}
.zoom-select select {
    padding-left: 9px;
}
```
